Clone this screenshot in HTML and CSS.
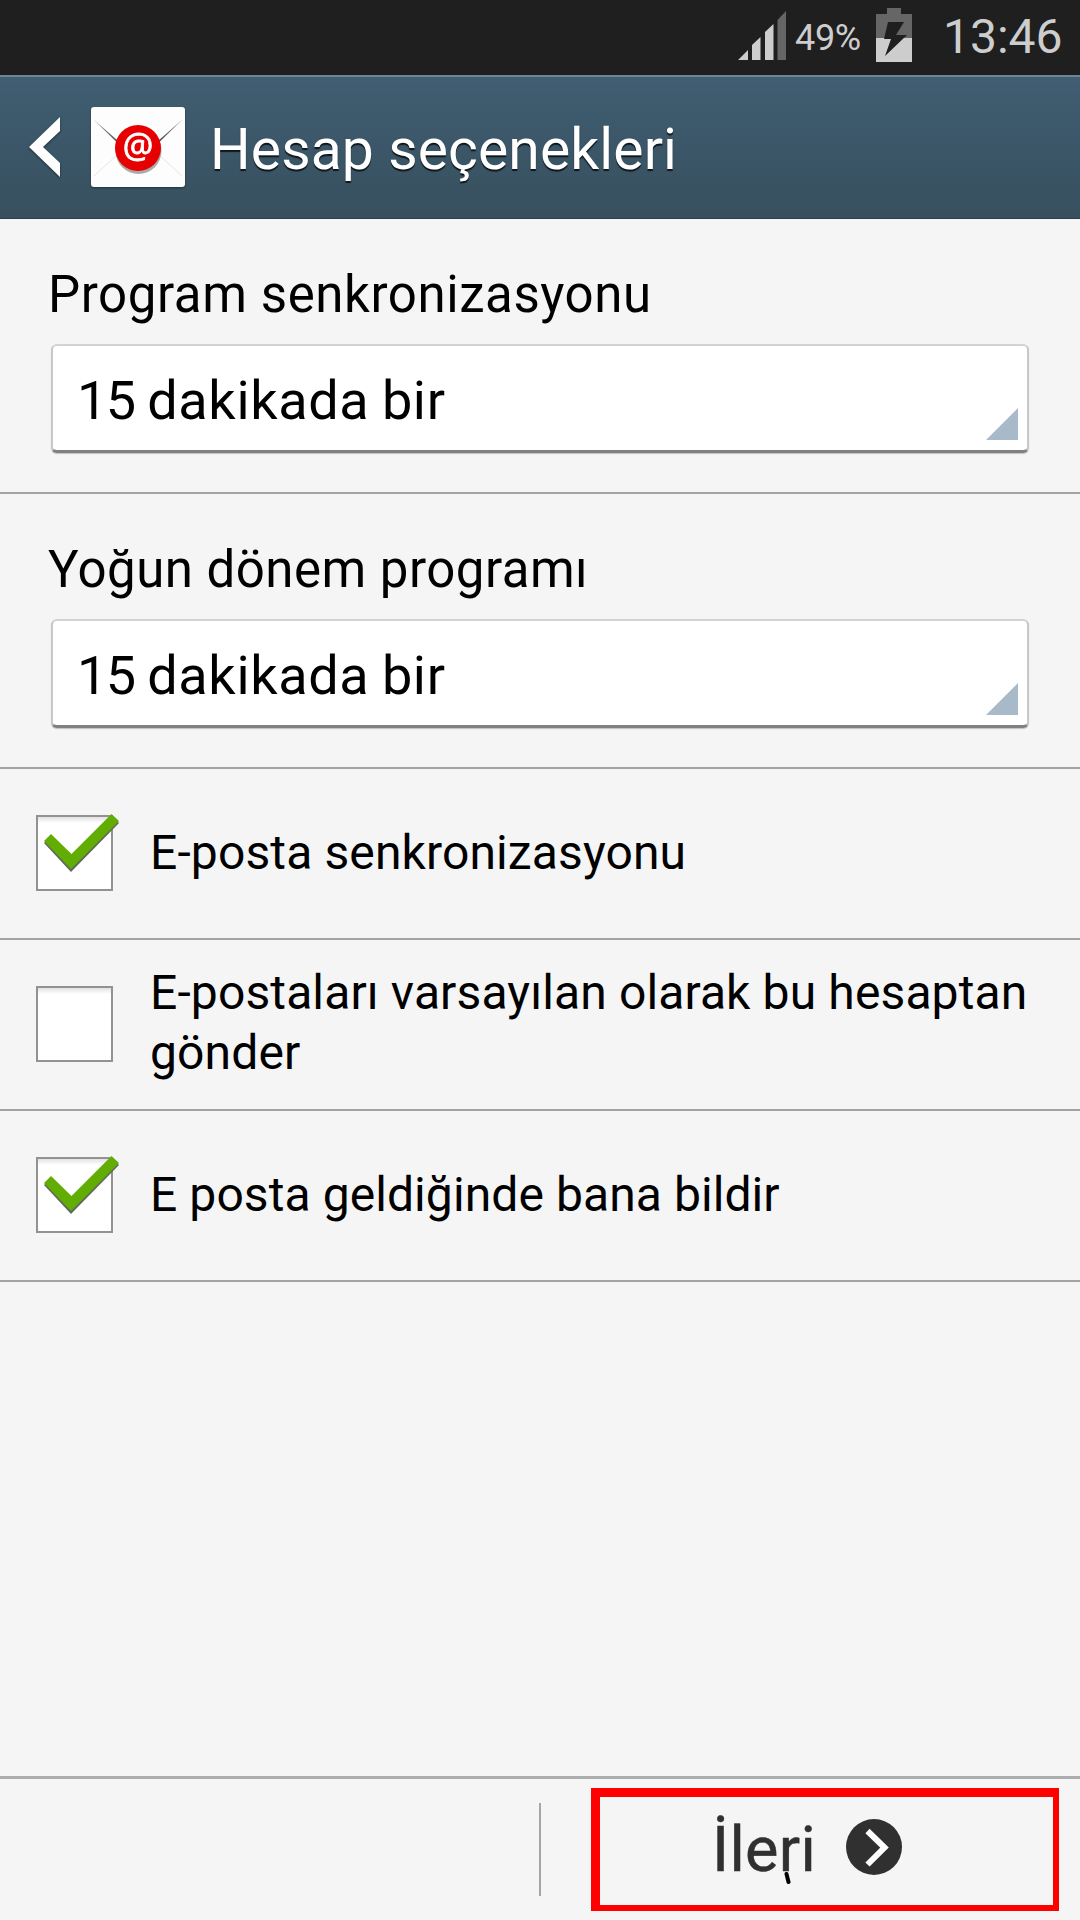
FILE: index.html
```html
<!DOCTYPE html>
<html lang="tr">
<head>
<meta charset="utf-8">
<title>Hesap seçenekleri</title>
<link rel="stylesheet" href="styles.css">
</head>
<body>
<div class="screen">
  <div class="status">
    <svg class="signal" width="50" height="50" viewBox="0 0 50 50">
      <path fill="#cdcdcd" d="M1 49 11 39V49zM15 49V34L23.500 26V49zM28 49V21L36.500 13V49z"/>
      <path fill="#666" d="M40.500 49V9L49 0V49z"/>
    </svg>
    <span class="percent">49%</span>
    <svg class="battery" width="36" height="54" viewBox="0 0 36 54">
      <path fill="#666" d="M11 0H25V6H36V30H0V6H11z"/>
      <path fill="#cdcdcd" d="M0 30H36V54H0z"/>
      <path fill="#1f1f1f" d="M12 14H28L20 27H31L9 48 15 31H8z"/>
    </svg>
    <span class="clock">13:46</span>
  </div>
  <header class="header">
    <svg class="back" width="32" height="60" viewBox="0 0 32 60"><path fill="#fff" d="M31 0V14L14 30 31 46V60L0 30z"/></svg>
    <svg class="mail" width="94" height="80" viewBox="0 0 94 80">
      <defs>
        <linearGradient id="fold" x1="0" x2="0" y1="0" y2="1"><stop offset="0" stop-color="#888"/><stop offset="1" stop-color="#555"/></linearGradient>
      </defs>
      <rect width="94" height="80" rx="3" fill="#fdfdfd"/>
      <path d="M3 69 28 46M91 69 66 46" stroke="#e6e6e6" fill="none"/>
      <path d="M2 12 26 33V35.500zM92 12 68 33V35.500z" fill="url(#fold)"/>
      <circle cx="47.500" cy="44" r="23" fill="#aaa"/>
      <circle cx="47" cy="41" r="23" fill="#e60000"/>
      <text class="at" x="47" y="50.500" text-anchor="middle">@</text>
    </svg>
    <h1 class="title">Hesap seçenekleri</h1>
  </header>
  <main class="content">
    <section class="field">
      <div class="label label-a">Program senkronizasyonu</div>
      <div class="spinner"><span class="value"><span class="digits">15</span> dakikada bir</span><i class="corner"></i></div>
    </section>
    <section class="field">
      <div class="label label-b">Yoğun dönem programı</div>
      <div class="spinner"><span class="value"><span class="digits">15</span> dakikada bir</span><i class="corner"></i></div>
    </section>
    <div class="row">
      <div class="box"><svg class="tick" width="78" height="62" viewBox="0 0 78 62"><path class="tick-shade" d="M2 30 9 23 29 43 70 3 77 10 29 59z"/><path class="tick-face" d="M2 28 9 21 29.500 41 69.500 1 77 8 29 56z"/></svg></div>
      <div class="text">E-posta senkronizasyonu</div>
    </div>
    <div class="row">
      <div class="box"></div>
      <div class="text text-long">E-postaları varsayılan olarak bu hesaptan<br>gönder</div>
    </div>
    <div class="row">
      <div class="box"><svg class="tick" width="78" height="62" viewBox="0 0 78 62"><path class="tick-shade" d="M2 30 9 23 29 43 70 3 77 10 29 59z"/><path class="tick-face" d="M2 28 9 21 29.500 41 69.500 1 77 8 29 56z"/></svg></div>
      <div class="text text-notify">E posta geldiğinde bana bildir</div>
    </div>
  </main>
  <footer class="footer">
    <div class="separator"></div>
    <div class="next">
      <span class="next-label">İleri</span>
      <svg class="stroke" width="8" height="13" viewBox="0 0 8 13"><path d="M2.500 2 4.500 10" stroke="#000" stroke-width="4" stroke-linecap="round"/></svg>
      <svg class="arrow" width="56" height="56" viewBox="0 0 56 56"><circle cx="28" cy="28" r="28" fill="#303030"/><path d="M21.500 12 38.500 28.500 21.500 45.500" fill="none" stroke="#fff" stroke-width="6"/></svg>
    </div>
  </footer>
</div>
</body>
</html>
```
FILE: styles.css
```css
* { box-sizing: border-box; }
body { margin: 0; background: #f5f5f5; font-family: Roboto, sans-serif; color: #000; }
.screen { width: 1080px; height: 1920px; display: flex; flex-direction: column; overflow: hidden; }
svg { display: block; flex: none; }

.status { height: 75px; flex: none; background: #1f1f1f; color: #cdcdcd; display: flex; align-items: flex-start; padding-left: 737px; white-space: nowrap; }
.signal { margin-top: 11px; }
.percent { width: 81px; margin-left: 8px; margin-top: 18px; font-size: 36px; line-height: 40px; letter-spacing: -0.3px; }
.battery { margin-top: 8px; }
.clock { margin-left: 31px; margin-top: 7px; font-size: 48px; line-height: 60px; }

.header { height: 144px; flex: none; display: flex; align-items: center; padding-left: 29px; border-top: 2px solid #6d8799; border-bottom: 1px solid #2b3f4b; background: linear-gradient(#415e72, #3b5769 45%, #38505e); }
.back { margin-bottom: 1px; filter: drop-shadow(0 1px 1px rgba(0,0,0,.5)); }
.mail { margin-left: 30px; margin-bottom: 1px; filter: drop-shadow(0 1px 1px rgba(0,0,0,.4)); }
.at { font: 34px "Open Sans", sans-serif; fill: #fff; stroke: #fff; stroke-width: .8px; }
.title { margin: 4px 0 0 25px; font-size: 57px; line-height: 70px; font-weight: 400; letter-spacing: .12px; color: #fff; text-shadow: 0 2px 1px rgba(0,0,0,.75); white-space: nowrap; }

.content { flex: 1; }
.field { height: 275px; padding: 46px 51px 0; border-bottom: 2px solid #a3a3a3; }
.label { margin: 0 0 19px -3px; font-size: 51px; line-height: 60px; white-space: nowrap; }
.label-a { letter-spacing: .58px; }
.label-b { letter-spacing: .48px; }
.spinner { height: 109px; display: flex; align-items: flex-end; justify-content: space-between; padding: 0 9px 10px 24px; background: #fff; border: 2px solid #c8c8c8; border-top-color: #d3d3d3; border-bottom: 3px solid #808080; border-radius: 6px; box-shadow: 0 1px 1px rgba(0,0,0,.22); }
.value { font-size: 54px; line-height: 64px; margin-bottom: 7px; letter-spacing: .65px; word-spacing: -1.5px; }
.digits { letter-spacing: -1.5px; }
.corner { width: 32px; height: 32px; background: #a8b9c9; clip-path: polygon(100% 0, 100% 100%, 0 100%); }
.row { height: 171px; display: flex; align-items: center; padding-left: 36px; border-bottom: 2px solid #a3a3a3; }
.box { position: relative; flex: none; width: 77px; height: 76px; margin-bottom: 2px; border: 2px solid #929292; background: linear-gradient(#e2e2e2, #fff 6px); }
.tick { position: absolute; left: 4px; top: -4px; }
.tick-face { fill: #62ad03; }
.tick-shade { fill: #5f6b5a; }
.text { margin-left: 37px; font-size: 48px; line-height: 60px; letter-spacing: .13px; white-space: nowrap; margin-top: -2px; }
.text-long { margin-top: -4px; }
.text-notify { letter-spacing: .08px; }

.footer { height: 144px; flex: none; display: flex; padding: 9px 21px 9px 539px; border-top: 3px solid #adadad; }
.separator { width: 2px; height: 93px; margin-top: 15px; background: #a6a6a6; }
.next { position: relative; width: 468px; height: 123px; margin-left: 50px; display: flex; align-items: flex-start; border: 9px solid #f00; border-right-width: 6px; border-bottom-width: 6px; color: #303030; }
.next-label { width: 130px; margin-left: 112px; margin-top: 16px; font-size: 63px; line-height: 74px; letter-spacing: .3px; -webkit-text-stroke: .5px #303030; }
.arrow { margin-left: 4px; margin-top: 22px; }
.stroke { position: absolute; left: 184px; top: 75px; }
```
